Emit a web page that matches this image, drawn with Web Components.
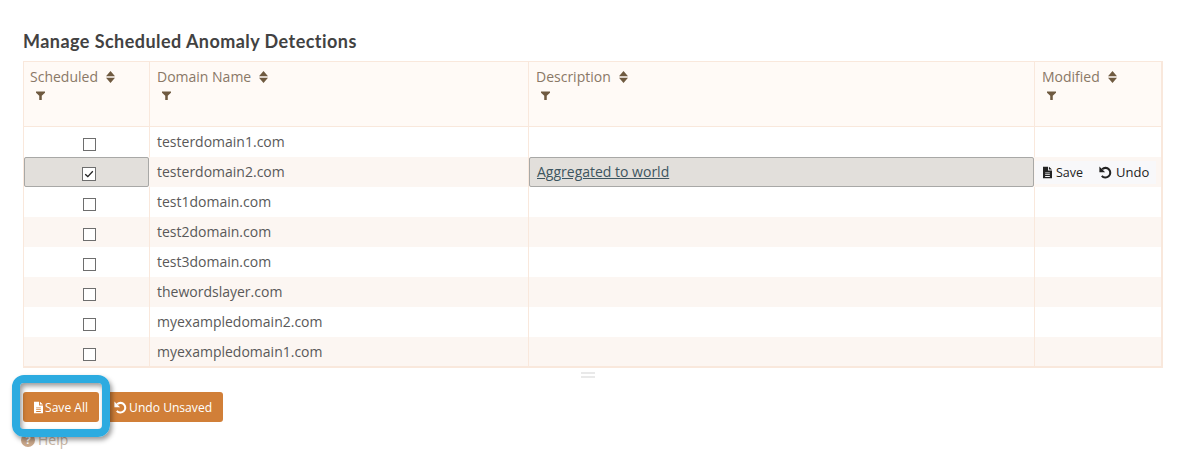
<!DOCTYPE html>
<html>
<head>
<meta charset="utf-8">
<title>Manage Scheduled Anomaly Detections</title>
<style>
  html, body { margin: 0; background: #fff; }
  body { width: 1204px; height: 452px; overflow: hidden; font-family: "Open Sans", sans-serif; }
  main-page { display: block; }
</style>
</head>
<body>
<main-page>
  <span slot="title">Manage Scheduled Anomaly Detections</span>
  <sched-table>
    <sched-head label="Scheduled"></sched-head>
    <sched-head label="Domain Name"></sched-head>
    <sched-head label="Description"></sched-head>
    <sched-head label="Modified"></sched-head>

    <sched-row domain="testerdomain1.com"></sched-row>
    <sched-row domain="testerdomain2.com" checked edited description="Aggregated to world"></sched-row>
    <sched-row domain="test1domain.com"></sched-row>
    <sched-row domain="test2domain.com"></sched-row>
    <sched-row domain="test3domain.com"></sched-row>
    <sched-row domain="thewordslayer.com"></sched-row>
    <sched-row domain="myexampledomain2.com"></sched-row>
    <sched-row domain="myexampledomain1.com"></sched-row>
  </sched-table>
</main-page>

<script>
const ICONS = {
  sort: `<svg width="9" height="12" viewBox="0 0 10 13" preserveAspectRatio="none"><path d="M5 0 10 5.8H0zM5 13 0 7.2H10z" fill="#6f5a40"/></svg>`,
  file: `<svg viewBox="0 0 10 13" width="9" height="13"><path fill="currentColor" fill-rule="evenodd" d="M0 0H5.6V4.2H10V13H0ZM6.6 0 10 3.2H6.6ZM2.4 6.4H7.6V7.4H2.4ZM2.4 8.4H7.6V9.4H2.4ZM2.4 10.4H7.6V11.4H2.4Z"/></svg>`,
  undo: `<svg viewBox="0 0 14 14" width="13" height="13"><path fill="none" stroke="currentColor" stroke-width="2.2" d="M3.4 3.4A5.2 5.2 0 1 1 3 10.6"/><path fill="currentColor" d="M.4.6 6.6 6.6H.4Z"/></svg>`,
  funnel: `<svg viewBox="0 0 10 10" width="9" height="9" preserveAspectRatio="none"><path fill="#6f5a40" d="M0 .5H10V2L6.4 5.2V10H3.6V5.2L0 2Z"/></svg>`
};

class SchedHead extends HTMLElement {
  constructor() {
    super();
    this.attachShadow({ mode: "open" });
  }

  connectedCallback() {
    this.shadowRoot.innerHTML = /* html */`
    <style>
      :host {
        display: block;
        padding: 5px 0 0 7px;
        background: #fffaf6;
        border-right: 1px solid #f9e8dc;
        border-bottom: 1px solid #f9e8dc;
        color: #8a7866;
        font-size: 14px;
        line-height: 20px;
      }
      :host(:first-of-type) { padding-left: 6px; }
      :host(:last-of-type) { border-right: 0; }
      .top { display: flex; align-items: center; gap: 8px; }
      .sort { display: flex; }
      .filter { display: block; margin: 4px 0 0 5px; line-height: 0; }
      :host(:first-of-type) .filter { margin-left: 6px; }
    </style>
    <div class="top"><span>${this.getAttribute("label")}</span><span class="sort">${ICONS.sort}</span></div>
    <div class="filter">${ICONS.funnel}</div>
    `;
  }
}

class SchedRow extends HTMLElement {
  constructor() {
    super();
    this.attachShadow({ mode: "open" });
  }

  connectedCallback() {
    const edited = this.hasAttribute("edited");
    const checked = this.hasAttribute("checked");
    const desc = this.getAttribute("description");
    this.shadowRoot.innerHTML = /* html */`
    <style>
      :host {
        display: grid;
        grid-column: 1 / -1;
        grid-template-columns: subgrid;
        height: 30px;
        color: #595959;
        font-size: 14px;
        background: #fff;
      }
      :host(:nth-of-type(even)) { background: #fcf6f2; }
      :host(:last-of-type) { height: 29px; }
      .cell {
        border-right: 1px solid #f9e8dc;
        display: flex;
        align-items: center;
        min-width: 0;
        box-sizing: border-box;
      }
      .cell:last-child { border-right: 0; }
      .check { justify-content: center; padding: 4px 0 0 6px; }
      :host(:last-of-type) .check { padding-top: 5px; }
      .domain { padding: 0 0 1px 7px; }
      :host(:last-of-type) .domain { padding-bottom: 0; }
      .box {
        width: 11px;
        height: 11px;
        border: 1px solid #6e6e6e;
        background: #fff;
        display: block;
        line-height: 0;
      }
      .edit {
        background: #e2dfdb;
        border: 1px solid #a8a8a6;
        border-radius: 2px;
        margin-right: 1px;
      }
      .check.edit { padding: 2px 0 0 4px; }
      .check.edit .box { width: 12px; height: 12px; margin-top: 2px; }
      .desc { padding: 0 0 2px 7px; }
      a { color: #3d5560; text-decoration: underline; }
      .actions {
        padding-left: 8px;
        gap: 16px;
        color: #222;
        font-size: 12.5px;
        background: #f8f8fa;
        margin: 4px 5px 3px 0;
      }
      .actions span { display: inline-flex; align-items: center; gap: 4px; }
      .actions span + span { font-size: 13px; margin-top: -1px; }
      .actions svg { display: block; }
    </style>
    <div class="cell check ${edited ? "edit" : ""}">
      <span class="box">${checked ? `<svg viewBox="0 0 12 12" width="12" height="12"><path d="M2.2 6.2 4.8 8.6 9.8 3.2" fill="none" stroke="#222" stroke-width="1.3"/></svg>` : ""}</span>
    </div>
    <div class="cell domain">${this.getAttribute("domain")}</div>
    <div class="cell desc ${edited ? "edit" : ""}">${desc ? `<a href="#">${desc}</a>` : ""}</div>
    <div class="${edited ? "cell actions" : "cell"}">
      ${edited ? `<span>${ICONS.file}Save</span><span>${ICONS.undo}Undo</span>` : ""}
    </div>
    `;
  }
}

class SchedTable extends HTMLElement {
  constructor() {
    super();
    this.attachShadow({ mode: "open" });
    this.shadowRoot.innerHTML = /* html */`
    <style>
      :host {
        display: block;
        width: 1140px;
        box-sizing: border-box;
      }
      .grid {
        display: grid;
        grid-template-columns: 126px 379px 506px 1fr;
        grid-template-rows: 65px;
        box-sizing: border-box;
        border: 1px solid #f9e8dc;
        border-right-width: 2px;
        border-bottom-width: 2px;
      }
      .grip {
        width: 14px;
        height: 2px;
        margin: 4px 0 0 558px;
        border-top: 2px solid #e9e9e9;
        border-bottom: 2px solid #e9e9e9;
      }
    </style>
    <div class="grid"><slot></slot></div>
    <div class="grip"></div>
    `;
  }
}

class ActionButton extends HTMLElement {
  constructor() {
    super();
    this.attachShadow({ mode: "open" });
  }

  connectedCallback() {
    this.shadowRoot.innerHTML = /* html */`
    <style>
      :host {
        display: inline-flex;
        align-items: center;
        gap: 2px;
        height: 30px;
        padding: 0 11px;
        box-sizing: border-box;
        background: #d17f38;
        border-radius: 3px;
        color: #fff;
        font-size: 12.1px;
      }
      svg { display: block; }
    </style>
    ${ICONS[this.getAttribute("icon")]}<slot></slot>
    `;
  }
}

class MainPage extends HTMLElement {
  constructor() {
    super();
    this.attachShadow({ mode: "open" });
    this.shadowRoot.innerHTML = /* html */`
    <style>
      :host {
        display: block;
        position: relative;
        height: 452px;
        padding: 30px 0 0 23px;
        box-sizing: border-box;
      }
      h2 {
        margin: 0 0 9px;
        font: 700 18px/22px Lato, sans-serif;
        letter-spacing: .45px;
        color: #424242;
      }
      .buttons { display: flex; gap: 4px; margin-top: 14px; }
      .help {
        display: flex;
        align-items: center;
        gap: 3px;
        margin: 8px 0 0 -2px;
        color: #c9b7a6;
        font-size: 14px;
      }
      .help i {
        width: 14px;
        height: 14px;
        border-radius: 50%;
        background: #c9a78a;
        color: #fff;
        font: 700 11px/14px "Open Sans", sans-serif;
        text-align: center;
      }
      .callout {
        position: absolute;
        left: 12px;
        top: 375px;
        width: 82px;
        height: 46px;
        border: 8px solid #2cabe0;
        border-radius: 12px;
        box-shadow: inset 2px 3px 5px rgba(0, 0, 0, .4), 2px 3px 5px rgba(0, 0, 0, .4);
      }
    </style>
    <h2><slot name="title"></slot></h2>
    <slot></slot>
    <div class="buttons">
      <action-button icon="file">Save All</action-button>
      <action-button icon="undo">Undo Unsaved</action-button>
    </div>
    <div class="help"><i>?</i>Help</div>
    <div class="callout"></div>
    `;
  }
}

customElements.define("sched-head", SchedHead);
customElements.define("sched-row", SchedRow);
customElements.define("sched-table", SchedTable);
customElements.define("action-button", ActionButton);
customElements.define("main-page", MainPage);
</script>
</body>
</html>
